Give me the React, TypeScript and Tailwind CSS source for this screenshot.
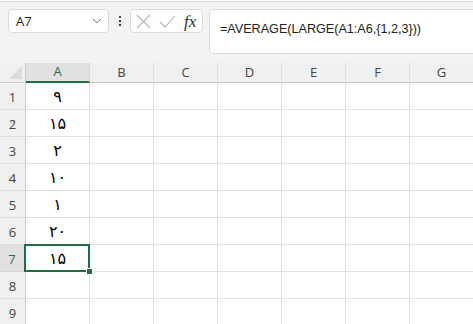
import React from 'react';
import { ChevronDown } from 'lucide-react';

const cols = ['A', 'B', 'C', 'D', 'E', 'F', 'G'];
const values = ['۹', '۱۵', '۲', '۱۰', '۱', '۲۰', '۱۵', '', ''];

const App: React.FC = () => {
  return (
    <div className="w-[473px] h-[324px] overflow-hidden bg-[#f3f3f3] font-['Open_Sans','Noto_Sans',sans-serif] text-[#222]">
      <div className="h-[2px] bg-[#fbfbfb] border-b border-[#dcdcdc]" />

      {/* formula bar */}
      <div className="flex items-start pt-[7px] pl-[8px] h-[60px]">
        <div className="w-[101px] h-[24px] bg-white border border-[#dadada] rounded-[4px] flex items-center justify-between pl-[7px] pr-[4px]">
          <span className="text-[13px] leading-none">A7</span>
          <ChevronDown size={14} strokeWidth={1.5} className="text-[#555]" />
        </div>
        <div className="w-[21px] h-[24px] flex flex-col items-center justify-center gap-[2px]">
          <span className="w-[2px] h-[2px] bg-[#444]" />
          <span className="w-[2px] h-[2px] bg-[#444]" />
          <span className="w-[2px] h-[2px] bg-[#444]" />
        </div>
        <div className="w-[73px] h-[24px] bg-white border border-[#dadada] rounded-[4px] flex items-center pl-[5px]">
          <svg width="15" height="15" viewBox="0 0 15 15" fill="none" stroke="#b5b5b5" strokeWidth="1.1">
            <path d="M1 1 L14 14 M14 1 L1 14" />
          </svg>
          <svg width="17" height="13" viewBox="0 0 17 13" fill="none" stroke="#b5b5b5" strokeWidth="1.1" className="ml-[8px]">
            <path d="M1 7 L6 12 L16 1" />
          </svg>
          <span className="ml-[8px] text-[17px] italic font-['Liberation_Serif',serif] text-[#333] leading-none">fx</span>
        </div>
        <div className="ml-[6px] flex-1 h-[45px] bg-white border border-[#dadada] border-r-0 rounded-l-[5px] pl-[10px] pt-[5px]">
          <span className="text-[12.6px] font-['Liberation_Sans',sans-serif] text-[#222]">=AVERAGE(LARGE(A1:A6,{'{'}1,2,3{'}'}))</span>
        </div>
      </div>

      {/* grid */}
      <div className="grid grid-cols-[26px_repeat(7,64px)] grid-rows-[20px_repeat(9,27px)] mt-[1px] text-[13px]">
        <div className="bg-[#f0f0f0] border-r border-b border-[#c8c8c8] relative">
          <svg className="absolute left-[9px] top-[3px]" width="13" height="13" viewBox="0 0 13 13">
            <polygon points="13,0 13,13 0,13" fill="#dcdcdc" />
          </svg>
        </div>
        {cols.map((c) => (
          <div
            key={c}
            className={
              c === 'A'
                ? 'bg-[#e1e1e1] border-r border-[#d4d4d4] border-b-2 border-b-[#1e6e42] flex items-center justify-center text-[#1e6e42]'
                : 'bg-[#f0f0f0] border-r border-[#dedede] border-b border-b-[#c8c8c8] flex items-center justify-center text-[#444]'
            }
          >
            {c}
          </div>
        ))}
        {values.map((v, i) => (
          <React.Fragment key={i}>
            <div
              className={
                i === 6
                  ? 'bg-[#e1e1e1] border-r-2 border-r-[#1e6e42] border-b border-[#d4d4d4] flex items-end justify-center pb-[2px] text-[#1e6e42]'
                  : 'bg-[#f0f0f0] border-r border-[#c8c8c8] border-b border-b-[#dedede] flex items-end justify-center pb-[2px] text-[#444]'
              }
            >
              {i + 1}
            </div>
            {cols.map((c) => (
              <div key={c} className="bg-white border-r border-b border-[#e1e1e1] relative">
                {c === 'A' && (
                  <div className="h-full flex items-start justify-center pt-[2px] text-[16px] font-normal font-['DejaVu_Sans',sans-serif] text-black">
                    {v}
                  </div>
                )}
                {c === 'A' && i === 6 && (
                  <>
                    <div className="absolute z-10 -left-[2px] -top-[1px] -right-[1px] -bottom-[1px] border-2 border-[#1e6e42]" />
                    <div className="absolute z-20 -right-[4px] -bottom-[4px] w-[7px] h-[7px] bg-[#1e6e42] border border-white" />
                  </>
                )}
              </div>
            ))}
          </React.Fragment>
        ))}
      </div>
    </div>
  );
};

export default App;
